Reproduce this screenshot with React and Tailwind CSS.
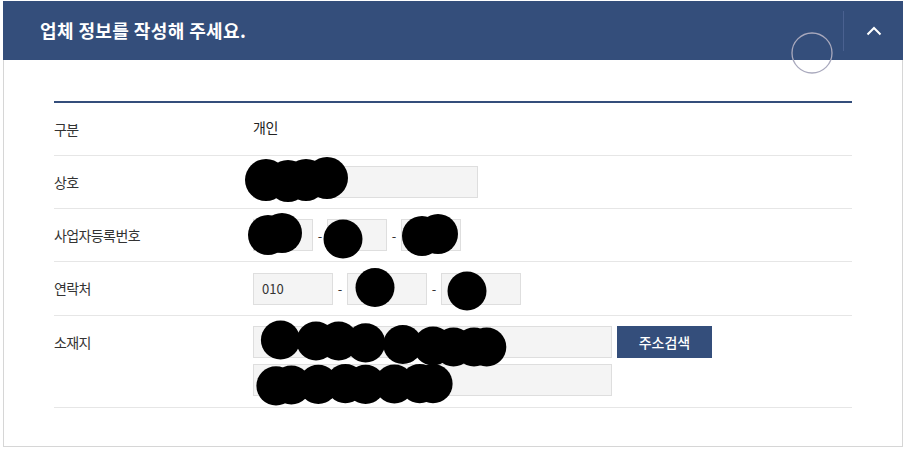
import React from "react";

const font = { fontFamily: '"Noto Sans CJK KR", "Noto Sans", sans-serif' };

function Input({ className = "", children }) {
  return (
    <div
      className={
        "h-8 border border-[#dedede] bg-[#f4f4f4] flex items-center px-2 text-[13px] text-[#333] " +
        className
      }
    >
      {children}
    </div>
  );
}

function Dash() {
  return <span className="w-[14px] text-center text-[13px] text-[#333] leading-none">-</span>;
}

function Row({ label, children, h = "min-h-[53px]" }) {
  return (
    <div className={"flex items-center border-b border-[#e6e6e6] py-[10px] " + h}>
      <div className="w-[199px] shrink-0 text-[14px] text-[#333] tracking-[-0.6px]">{label}</div>
      <div className="flex-1">{children}</div>
    </div>
  );
}

const blobs = [
  // 상호
  [266, 180, 21], [288, 181, 21], [306, 180, 21], [327, 178, 21],
  // 사업자
  [268, 235, 20], [282, 233, 20],
  [343, 239, 19.5],
  [422, 236, 20], [438, 234, 20],
  // 연락처
  [375, 287.5, 19.5],
  [467, 291, 19.5],
  // 주소 1
  [280.5, 340, 19.6], [316, 341, 19.6], [338.6, 341, 19.6], [365.6, 342.8, 19.6],
  [402.8, 344.5, 19.6], [433, 346, 19.6], [453.5, 347, 19.6], [474, 347, 19.6], [486.7, 347, 19.6],
  // 주소 2
  [276, 385.8, 19.6], [291.3, 385, 19.6], [318.3, 384.4, 19.6], [345.4, 383.7, 19.6],
  [365.6, 384.4, 19.6], [394.4, 384, 19.6], [419.7, 383.7, 19.6], [433, 383.7, 19.6],
];

export default function App() {
  return (
    <div className="relative w-[907px] h-[449px] bg-white overflow-hidden" style={font}>
      <div className="ml-[3px] mt-[1px] w-[900px] flex flex-col">
        <div className="h-[59px] bg-[#344e7b] flex items-center">
          <div className="flex-1 pl-[37px] text-white text-[18px] font-bold tracking-[0.4px]">
            업체 정보를 작성해 주세요.
          </div>
          <div className="w-px h-[40px] bg-[#4a6190]" />
          <div className="w-[59px] flex items-center justify-center">
            <svg width="16" height="10" viewBox="0 0 16 10">
              <path d="M1.5 8.5 L8 2 L14.5 8.5" fill="none" stroke="white" strokeWidth="2" />
            </svg>
          </div>
        </div>
        <div className="h-[387px] border-x border-b border-[#d6d6d6] px-[50px] pt-[41px]">
          <div className="border-t-2 border-[#344e7b]">
            <div className="flex items-center h-[53px] border-b border-[#e6e6e6]">
              <div className="w-[199px] shrink-0 text-[14px] text-[#333] tracking-[-0.6px]">구분</div>
              <div className="text-[14px] text-[#222] -mt-[3px] tracking-[-0.4px]">개인</div>
            </div>
            <Row label="상호">
              <Input className="w-[225px]" />
            </Row>
            <Row label="사업자등록번호">
              <div className="flex items-center">
                <Input className="w-[60px]" />
                <Dash />
                <Input className="w-[60px]" />
                <Dash />
                <Input className="w-[60px]" />
              </div>
            </Row>
            <Row label="연락처" h="min-h-[54px]">
              <div className="flex items-center">
                <Input className="w-[80px]">010</Input>
                <Dash />
                <Input className="w-[80px]" />
                <Dash />
                <Input className="w-[80px]" />
              </div>
            </Row>
            <div className="flex items-start border-b border-[#e6e6e6] pt-[10px] pb-[11px]">
              <div className="w-[199px] shrink-0 text-[14px] text-[#333] pt-[6px] tracking-[-0.6px]">소재지</div>
              <div className="flex flex-col gap-[6px]">
                <div className="flex items-center gap-[5px]">
                  <Input className="w-[359px]" />
                  <button className="w-[95px] h-8 bg-[#344e7b] text-white text-[14px] font-medium">주소검색</button>
                </div>
                <Input className="w-[359px]" />
              </div>
            </div>
          </div>
        </div>
      </div>
      <svg className="absolute left-0 top-0 pointer-events-none" width="907" height="449">
        {blobs.map(([x, y, r], i) => (
          <circle key={i} cx={x} cy={y} r={r} fill="black" />
        ))}
        <circle cx="812" cy="53" r="20" fill="none" stroke="#a9a9bd" strokeWidth="1.3" />
      </svg>
    </div>
  );
}
